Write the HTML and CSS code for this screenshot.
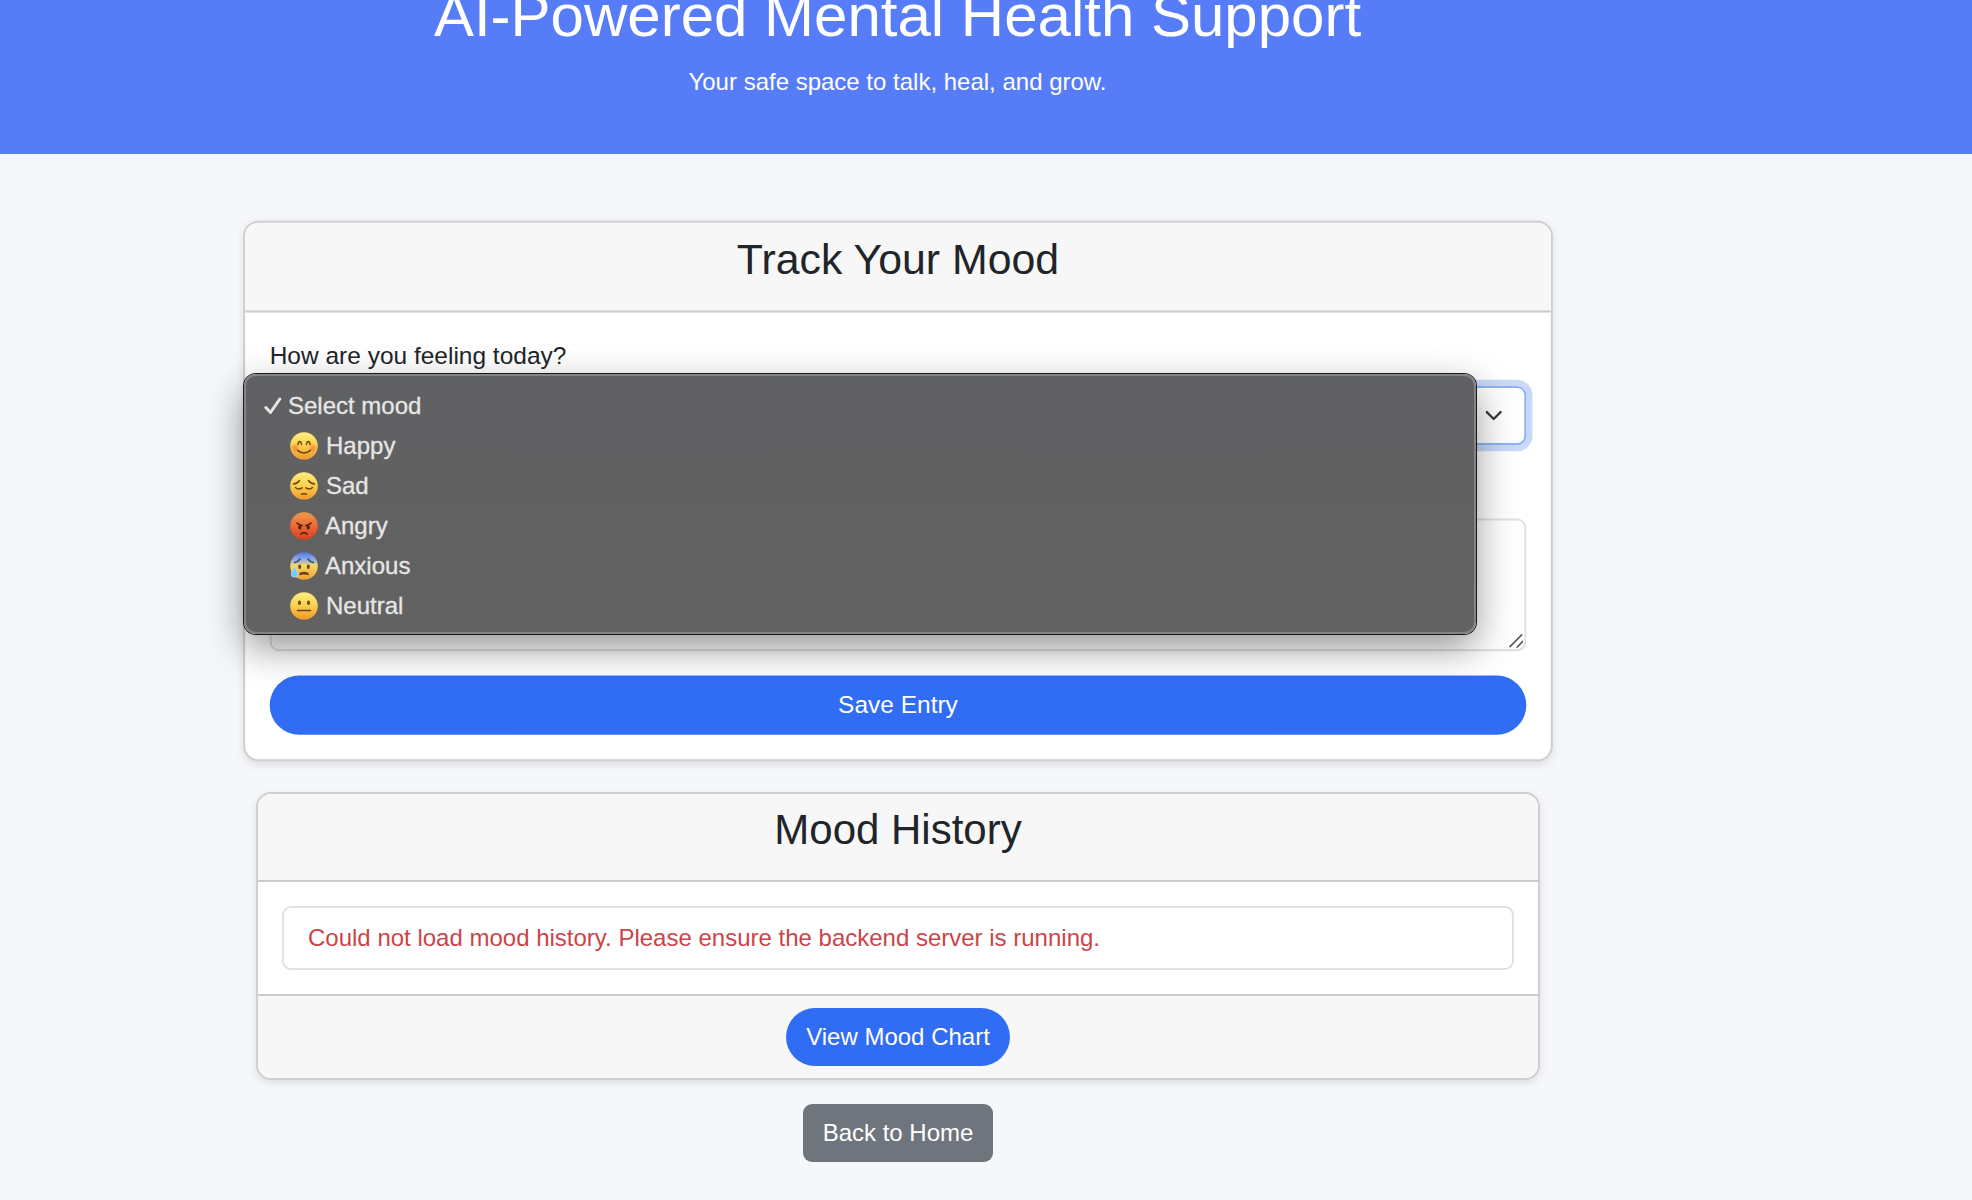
FILE: index.html
```html
<!DOCTYPE html>
<html lang="en">
<head>
  <meta charset="UTF-8" />
  <title>Mood Tracker</title>
  <meta name="viewport" content="width=device-width, initial-scale=1.0" />
  <link rel="stylesheet" href="styles.css">
</head>
<body>
  <header class="hero">
    <div class="hero-inner">
      <h1>AI-Powered Mental Health Support</h1>
      <p>Your safe space to talk, heal, and grow.</p>
    </div>
  </header>

  <main class="page">
    <section class="card card-active">
      <div class="card-header"><h3>Track Your Mood</h3></div>
      <form class="card-body" id="moodForm">
        <label for="mood">How are you feeling today?</label>
        <div class="select" id="mood" tabindex="0">
          <svg class="chevron" viewBox="0 0 16 16"><path d="m2 5 6 6 6-6" /></svg>
        </div>
        <div class="note">
          <textarea id="note" rows="3" aria-label="Notes"></textarea>
          <svg class="grip" viewBox="0 0 14 14"><path d="M1 12.5 12.5 1M8 13l5.500-5.500" /></svg>
        </div>
        <button type="submit" class="btn btn-primary btn-block">Save Entry</button>
      </form>
    </section>

    <section class="card">
      <div class="card-header"><h3>Mood History</h3></div>
      <div class="card-body">
        <ul class="history">
          <li>Could not load mood history. Please ensure the backend server is running.</li>
        </ul>
      </div>
      <div class="card-footer">
        <a href="#" class="btn btn-primary">View Mood Chart</a>
      </div>
    </section>

    <a href="#" class="btn btn-secondary">Back to Home</a>

    <ul class="dropdown">
      <li class="selected">
        <svg class="check" viewBox="0 0 18 18"><path d="M1.800 10.500 6.500 15.500 15.800 2" /></svg>
        <span>Select mood</span>
      </li>
      <li>
        <svg class="face" viewBox="0 0 28 28">
          <defs>
            <linearGradient id="yellow" x1="0" y1="0" x2="0" y2="1">
              <stop offset="0" stop-color="#ffee80" />
              <stop offset="0.5" stop-color="#fad04c" />
              <stop offset="1" stop-color="#ee962c" />
            </linearGradient>
            <linearGradient id="red" x1="0" y1="0" x2="0" y2="1">
              <stop offset="0" stop-color="#f19a48" />
              <stop offset="0.5" stop-color="#e96835" />
              <stop offset="1" stop-color="#d83d20" />
            </linearGradient>
            <linearGradient id="blue" x1="0" y1="0" x2="0" y2="1">
              <stop offset="0" stop-color="#4a78e0" />
              <stop offset="0.25" stop-color="#8aa9e8" />
              <stop offset="0.48" stop-color="#f5d968" />
              <stop offset="1" stop-color="#ef9f2f" />
            </linearGradient>
            <radialGradient id="blush">
              <stop offset="0" stop-color="#f5703a" stop-opacity="0.75" />
              <stop offset="1" stop-color="#f5703a" stop-opacity="0" />
            </radialGradient>
          </defs>
          <circle cx="14" cy="14" r="13.800" fill="url(#yellow)" />
          <circle cx="5" cy="16" r="5" fill="url(#blush)" />
          <circle cx="23" cy="16" r="5" fill="url(#blush)" />
          <path class="line" d="M8 12.500C8.300 8.500 11 8.500 11.500 12.500M16.500 12.500C17 8.500 19.700 8.500 20 12.500M7.500 18.300Q14 23.500 20.500 18.300" />
        </svg>
        <span>Happy</span>
      </li>
      <li>
        <svg class="face" viewBox="0 0 28 28">
          <circle cx="14" cy="14" r="13.800" fill="url(#yellow)" />
          <path class="line" d="M3.500 12Q7.500 11.500 9.500 8.500M18.500 8.500Q20.500 11.500 24.500 12M5.500 15.500Q8.500 18.500 12 15.800M16 15.800Q19.500 18.500 22.500 15.500M11.500 22.300Q14 21.300 16.500 22.300" />
        </svg>
        <span>Sad</span>
      </li>
      <li>
        <svg class="face" viewBox="0 0 28 28">
          <circle cx="14" cy="14" r="13.800" fill="url(#red)" />
          <path class="line dark" d="M7 11Q9 13.300 12.300 13.500M21 11Q19 13.300 15.700 13.500M10.800 22Q14 19.200 17.200 22" />
          <ellipse class="eye dark" cx="9.800" cy="15.500" rx="1.500" ry="2.100" />
          <ellipse class="eye dark" cx="18.200" cy="15.500" rx="1.500" ry="2.100" />
        </svg>
        <span class="tight">Angry</span>
      </li>
      <li>
        <svg class="face" viewBox="0 0 28 28">
          <circle cx="14" cy="14" r="13.800" fill="url(#blue)" />
          <path class="line brow" d="M4.500 10.500Q8 10 10 7M18 7Q20 10 23.500 10.500" />
          <ellipse class="eye" cx="9.700" cy="14.800" rx="1.500" ry="2.200" />
          <ellipse class="eye" cx="18.300" cy="14.800" rx="1.500" ry="2.200" />
          <path class="line" d="M10 22.300Q10.500 20.500 14 20.500T18 22.300Q14 21.300 10 22.300Z" />
          <path class="tear" d="M4.500 14.500C6 18 7.800 19.800 7.800 22a3.300 3.300 0 0 1-6.600 0C1.200 19.800 3.500 18 4.500 14.500Z" />
        </svg>
        <span class="tight">Anxious</span>
      </li>
      <li>
        <svg class="face" viewBox="0 0 28 28">
          <circle cx="14" cy="14" r="13.800" fill="url(#yellow)" />
          <ellipse class="eye" cx="9.500" cy="10.800" rx="1.500" ry="2.300" />
          <ellipse class="eye" cx="18.500" cy="10.800" rx="1.500" ry="2.300" />
          <path class="line" d="M7.500 18.500H20.500" />
        </svg>
        <span>Neutral</span>
      </li>
    </ul>
  </main>
</body>
</html>
```
FILE: styles.css
```css
* {
  margin: 0;
  padding: 0;
  box-sizing: border-box;
}

body {
  background-color: #f5f7fb;
  color: #212529;
  font-family: "Liberation Sans", Arial, sans-serif;
  font-size: 24px;
  line-height: 36px;
  height: 1200px;
  overflow: hidden;
}

.hero {
  display: flex;
  flex-direction: column;
  justify-content: flex-end;
  height: 154px;
  padding-bottom: 54px;
  overflow: hidden;
  background-color: #577cf8;
  color: #fff;
}

.hero-inner {
  width: 1795px;
  text-align: center;
}

.hero h1 {
  font-size: 60px;
  font-weight: 400;
  line-height: 72px;
  margin-bottom: 12px;
}

.page {
  width: 1796px;
  padding-top: 72px;
  display: flex;
  flex-direction: column;
  align-items: center;
}

/* Cards */
.card {
  width: 1284px;
  margin-bottom: 24px;
  border: 2px solid #cfcfcf;
  border-radius: 15px;
  background-color: #fff;
  box-shadow: 0 3px 8px rgba(0, 0, 0, 0.1);
  overflow: hidden;
}

.card-active {
  margin-bottom: 36px;
  transform: scale(1.02);
}

.card-header {
  padding: 11px 24px 12px;
  background-color: #f7f7f7;
  border-bottom: 2px solid #cbcbcb;
  text-align: center;
}

.card-header h3 {
  font-size: 42px;
  font-weight: 400;
  line-height: 50px;
  margin-bottom: 13px;
}

.card-body {
  padding: 24px;
}

.card-footer {
  display: flex;
  justify-content: center;
  padding: 12px 24px;
  background-color: #f7f7f7;
  border-top: 2px solid #cbcbcb;
}

/* Form */
label {
  display: block;
  margin-bottom: 12px;
}

.select {
  display: flex;
  align-items: center;
  justify-content: flex-end;
  height: 58px;
  padding-right: 21px;
  border: 2px solid #8cb4f8;
  border-radius: 9px;
  box-shadow: 0 0 0 6px #c9d8fb;
}

.chevron {
  width: 18px;
  height: 18px;
  fill: none;
  stroke: #343a40;
  stroke-width: 2;
  stroke-linecap: round;
  stroke-linejoin: round;
}

.note {
  position: relative;
  margin: 72px 0 24px;
}

.note textarea {
  display: block;
  width: 100%;
  height: 130px;
  border: 2px solid #dee2e6;
  border-radius: 9px;
  background-color: #fff;
  font: inherit;
  resize: none;
  outline: none;
}

.grip {
  position: absolute;
  right: 3px;
  bottom: 3px;
  width: 14px;
  height: 14px;
  fill: none;
  stroke: #5c5c5c;
  stroke-width: 1.600;
  stroke-linecap: round;
}

.btn {
  display: inline-block;
  height: 58px;
  padding: 11px 20px;
  border: none;
  border-radius: 9px;
  color: #fff;
  font: inherit;
  text-align: center;
  text-decoration: none;
}

.btn-primary {
  background-color: #316cf4;
  border-radius: 30px;
}

.btn-block {
  display: block;
  width: 100%;
}

.btn-secondary {
  background-color: #6e757c;
}

/* History */
.history {
  list-style: none;
  border: 2px solid #dee2e6;
  border-radius: 9px;
}

.history li {
  padding: 12px 24px;
  color: #cb444a;
}

/* Open select menu */
.dropdown {
  position: absolute;
  left: 244px;
  top: 374px;
  width: 1232px;
  height: 260px;
  padding: 10px 19px;
  list-style: none;
  border: 2px solid #848484;
  border-radius: 12px;
  background: linear-gradient(#606164, #616162 45%, #626262);
  color: #e6e6e6;
  box-shadow: 0 0 0 1px #191919, 0 14px 38px rgba(0, 0, 0, 0.42);
}

.dropdown li {
  display: flex;
  align-items: center;
  height: 40px;
  padding-left: 25px;
}

.dropdown span {
  padding-left: 8px;
  -webkit-text-stroke: 0.3px #e6e6e6;
}

.dropdown .tight {
  padding-left: 7px;
}

.dropdown .selected {
  padding-left: 0;
}

.check {
  width: 18px;
  height: 18px;
  margin-left: -1px;
  fill: none;
  stroke: #e6e6e6;
  stroke-width: 3;
  stroke-linecap: round;
  stroke-linejoin: round;
}

.dropdown .selected span {
  padding-left: 6px;
}

.face {
  width: 28px;
  height: 28px;
}

.line {
  fill: none;
  stroke: #6e4212;
  stroke-width: 1.500;
  stroke-linecap: round;
}

.eye {
  fill: #6e4212;
}

.line.dark {
  stroke: #4c1d10;
}

.eye.dark {
  fill: #4c1d10;
}

.line.brow {
  stroke: #2e477e;
}

.tear {
  fill: #6ccbf8;
  stroke: #d6f3ff;
  stroke-width: 0.500;
}
```
